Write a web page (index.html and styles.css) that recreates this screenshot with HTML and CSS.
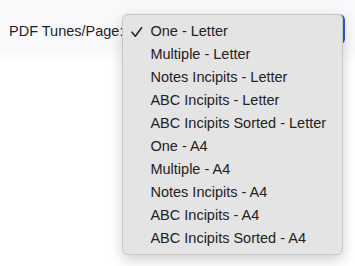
FILE: index.html
```html
<!DOCTYPE html>
<html lang="en">
<head>
    <meta charset="UTF-8">
    <title>PDF Tunes/Page</title>
    <link rel="stylesheet" href="styles.css">
</head>
<body>
    <header class="toolbar">
        <label class="field-label" for="pdf-format">PDF Tunes/Page:</label>
        <div class="picker" id="pdf-format">
            <ul class="menu">
                <li class="menu-item selected">
                    <svg class="check" width="12" height="11" viewBox="0 0 12 11">
                        <path d="M1 5.2 L4.3 9.2 L10.6 0.8" fill="none" stroke="#222" stroke-width="1.5" stroke-linecap="round" stroke-linejoin="round"/>
                    </svg>
                    <span>One - Letter</span>
                </li>
                <li class="menu-item"><span>Multiple - Letter</span></li>
                <li class="menu-item"><span>Notes Incipits - Letter</span></li>
                <li class="menu-item"><span>ABC Incipits - Letter</span></li>
                <li class="menu-item"><span>ABC Incipits Sorted - Letter</span></li>
                <li class="menu-item"><span>One - A4</span></li>
                <li class="menu-item"><span>Multiple - A4</span></li>
                <li class="menu-item"><span>Notes Incipits - A4</span></li>
                <li class="menu-item"><span>ABC Incipits - A4</span></li>
                <li class="menu-item"><span>ABC Incipits Sorted - A4</span></li>
            </ul>
        </div>
    </header>
</body>
</html>
```

FILE: styles.css
```css
* {
    margin: 0;
    padding: 0;
    box-sizing: border-box;
}

html,
body {
    min-height: 100%;
}

body {
    min-height: 266px;
    background: #ffffff;
    color: #222222;
    font-family: 'Liberation Sans', Arial, sans-serif;
    font-size: 14.5px;
}

/* Toolbar */
.toolbar {
    position: relative;
    z-index: 1;
    height: 60px;
    background: linear-gradient(#f9f9fb 80%, #fdfdfe);
    display: flex;
    align-items: flex-start;
    padding: 14px 0 0 9px;
}

.field-label {
    padding-top: 5.5px;
    line-height: 23px;
    color: #1f1f1f;
    margin-right: -1px;
}

/* Select + open menu */
.picker {
    position: relative;
    width: 223px;
    height: 31px;
    border-right: 2px solid #1f5fcf;
    border-radius: 0 6px 6px 0;
}

.menu {
    position: absolute;
    z-index: 10;
    top: 0;
    left: 0;
    width: 221px;
    list-style: none;
    background: #e4e4e4;
    border: 1px solid #c8c8c8;
    border-radius: 6px;
    padding: 4.5px 0 4px;
    box-shadow: 0 5px 14px rgba(0, 0, 0, 0.18);
}

.menu-item {
    position: relative;
    height: 23px;
    line-height: 23px;
    padding-left: 27px;
    color: #222222;
    white-space: nowrap;
}

.check {
    position: absolute;
    left: 8px;
    top: 7px;
}
```
